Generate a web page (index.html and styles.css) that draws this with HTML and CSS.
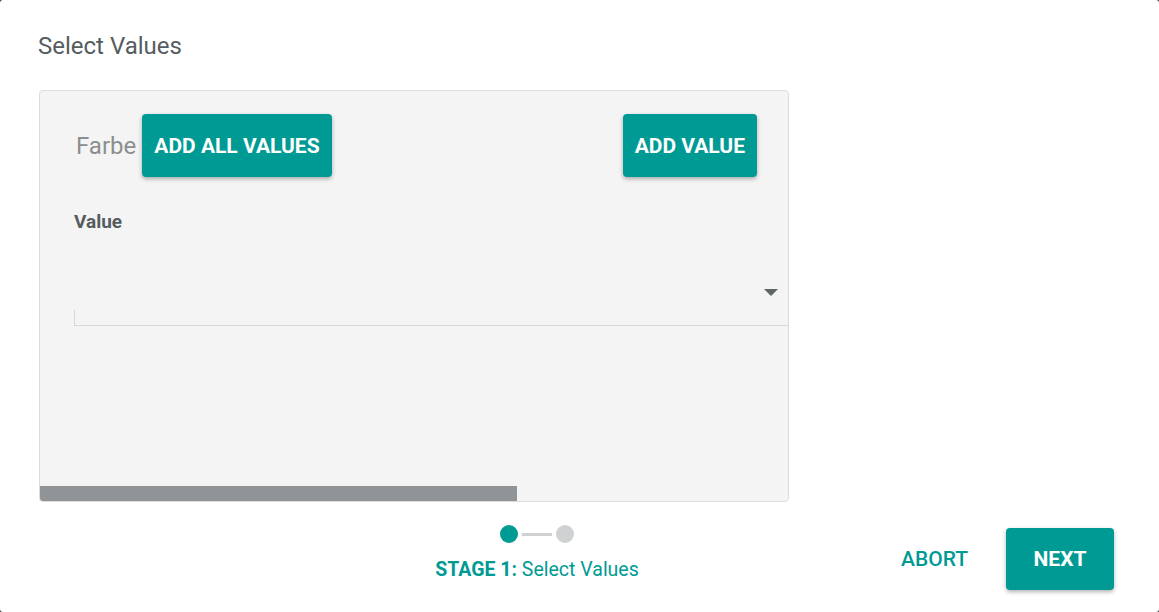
FILE: index.html
```html
<!DOCTYPE html>
<html>
<head>
<meta charset="utf-8">
<link rel="stylesheet" href="styles.css">
</head>
<body>
<div class="dialog">
  <h2 class="title">Select Values</h2>
  <div class="panel">
    <div class="panel-body">
      <div class="toolbar">
        <div class="left-group">
          <span class="attr">Farbe</span>
          <button class="btn raised">ADD ALL VALUES</button>
        </div>
        <button class="btn raised">ADD VALUE</button>
      </div>
      <div class="field">
        <div class="field-label">Value</div>
        <div class="select">
          <span class="arrow"></span>
        </div>
      </div>
    </div>
    <div class="scrollbar"><div class="thumb"></div></div>
  </div>
  <div class="footer">
    <div class="stepper">
      <div class="steps">
        <span class="dot active"></span>
        <span class="line"></span>
        <span class="dot"></span>
      </div>
      <div class="stage"><b>STAGE 1:</b> Select Values</div>
    </div>
    <div class="actions">
      <button class="btn flat">ABORT</button>
      <button class="btn raised next">NEXT</button>
    </div>
  </div>
</div>
</body>
</html>
```
FILE: styles.css
```css
html, body {
  margin: 0;
  padding: 0;
  background: #3a3a3a;
}
body {
  font-family: Roboto, "Liberation Sans", sans-serif;
}
.dialog {
  width: 1159px;
  height: 612px;
  background: #fff;
  border-radius: 3px;
  box-sizing: border-box;
  padding: 32px 45px 0 39px;
  display: flex;
  flex-direction: column;
}
.title {
  margin: 0 0 0 -1px;
  font-size: 24px;
  font-weight: 400;
  line-height: 28px;
  color: #555c5f;
}
.panel {
  margin-top: 30px;
  width: 750px;
  height: 412px;
  box-sizing: border-box;
  background: #f4f4f4;
  border: 1px solid #dcdcdc;
  border-radius: 4px;
  display: flex;
  flex-direction: column;
  overflow: hidden;
}
.panel-body {
  flex: 1;
  padding: 23px 31px 0 34px;
}
.toolbar {
  display: flex;
  justify-content: space-between;
  align-items: center;
}
.left-group {
  display: flex;
  align-items: center;
}
.attr {
  font-size: 24px;
  color: #8a8e90;
  margin: 0 6px 0 2px;
}
.btn {
  font-family: Roboto, "Liberation Sans", sans-serif;
  border: none;
  cursor: pointer;
}
.raised {
  height: 63px;
  padding: 0 12px;
  background: #009a94;
  color: #fff;
  font-size: 21px;
  font-weight: 700;
  border-radius: 4px;
  box-shadow: 0 2px 4px rgba(0,0,0,0.3);
}
.field {
  margin-top: 33px;
}
.field-label {
  font-size: 19px;
  font-weight: 700;
  color: #555c5f;
  line-height: 24px;
}
.select {
  margin-top: 55px;
  margin-right: -31px;
  height: 37px;
  display: flex;
  justify-content: flex-end;
  align-items: flex-start;
  position: relative;
}
.select::before {
  content: "";
  position: absolute;
  left: 0;
  bottom: 0;
  width: 1px;
  height: 16px;
  background: #d8d8d8;
}
.select::after {
  content: "";
  position: absolute;
  left: 0;
  right: 0;
  bottom: 0;
  height: 1px;
  background: #d8d8d8;
}
.arrow {
  width: 0;
  height: 0;
  border-left: 7px solid transparent;
  border-right: 7px solid transparent;
  border-top: 7px solid #5f6467;
  margin-right: 10px;
}
.scrollbar {
  height: 15px;
  background: transparent;
}
.thumb {
  width: 477px;
  height: 15px;
  background: #919497;
}
.footer {
  display: flex;
  align-items: flex-start;
  margin-top: 23px;
}
.stepper {
  flex: 1;
  padding-left: 150px;
  display: flex;
  flex-direction: column;
  align-items: center;
}
.steps {
  display: flex;
  align-items: center;
  gap: 4px;
}
.dot {
  width: 18px;
  height: 18px;
  border-radius: 50%;
  background: #cfd1d3;
}
.dot.active {
  background: #009a94;
}
.line {
  width: 30px;
  height: 3px;
  background: #cfd1d3;
}
.stage {
  margin-top: 15px;
  font-size: 19.5px;
  color: #009a94;
  line-height: 24px;
}
.stage b {
  font-weight: 700;
}
.actions {
  display: flex;
  align-items: center;
  gap: 22px;
  margin-top: 3px;
}
.flat {
  background: transparent;
  color: #009a94;
  font-size: 21px;
  font-weight: 500;
  padding: 0 16px;
  height: 62px;
}
.next {
  height: 62px;
  width: 108px;
  font-size: 21px;
}
```
